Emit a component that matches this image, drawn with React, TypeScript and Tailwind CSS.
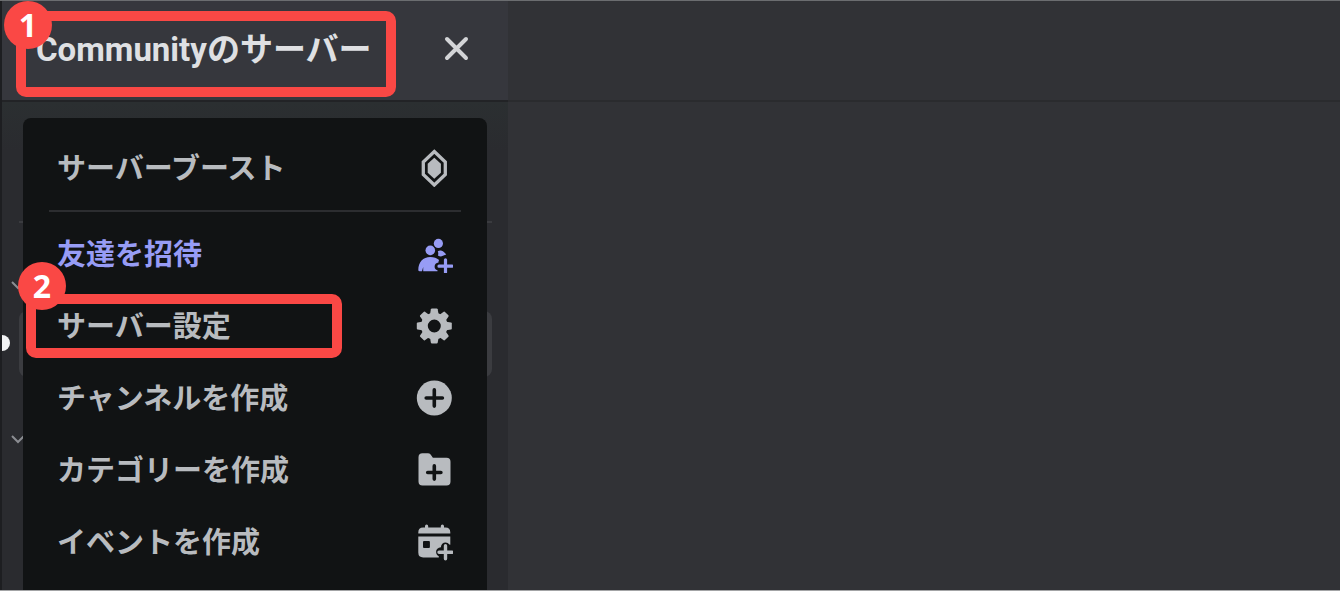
import React from 'react';

type IconProps = { children: React.ReactNode };

function Icon({ children }: IconProps) {
  return (
    <svg viewBox="0 0 38 38" className="h-[38px] w-[38px] shrink-0" fill="currentColor" aria-hidden="true">
      {children}
    </svg>
  );
}

function BoostIcon() {
  return (
    <Icon>
      <path d="M19.3 2.5 30.3 13v12.5L19.3 36 8.3 25.5V13Z" fill="none" stroke="currentColor" strokeWidth="3.3" />
      <path d="M19.3 8.8 25.9 14.8v8.9L19.3 29.7l-6.6-6v-8.9Z" />
    </Icon>
  );
}

function InviteIcon() {
  return (
    <Icon>
      <circle cx="23.4" cy="8.4" r="4.6" />
      <path d="M22.8 16.2c1.2-.9 2.6-1 3.9-.5 1.7.6 3.2 2 4.5 3.8l-5.2 2c-1-.1-2-.5-3.1-1.1.6-1.3.5-2.8-.1-4.2Z" />
      <circle cx="15.3" cy="15.4" r="4.8" />
      <path d="M3.3 35c0-7.7 4.7-13 12-13 3.6 0 6.5 1 8.8 3.1-.5.7-.7 1.5-.6 2.4-2.4.3-3.9 1.8-3.9 3.9 0 2 1.1 3.4 2.9 3.9v.9H8.2v-4.3l-1.2 4.3H4.5c-.8 0-1.200-.5-1.200-1.200Z" />
      <path d="M30.5 24.8v12.6M24 31.2h13" stroke="currentColor" strokeWidth="3.2" strokeLinecap="round" />
    </Icon>
  );
}

function GearIcon() {
  const teeth = [0, 45, 90, 135, 180, 225, 270, 315];
  return (
    <Icon>
      <circle cx="19.3" cy="19" r="9.9" fill="none" stroke="currentColor" strokeWidth="6.8" />
      {teeth.map((angle) => (
        <path
          key={angle}
          d="M14.8 8.5 15.9 2.3q.2-.8 1-.8h4.8q.8 0 1 .8L23.8 8.5Z"
          transform={`rotate(${angle} 19.3 19)`}
        />
      ))}
    </Icon>
  );
}

function ChannelIcon() {
  return (
    <Icon>
      <circle cx="19.3" cy="19" r="17.5" />
      <path d="M19.3 10.9v16.2M11.2 19h16.2" stroke="#111314" strokeWidth="3.6" strokeLinecap="round" />
    </Icon>
  );
}

function FolderIcon() {
  return (
    <Icon>
      <path d="M3.5 6.2q0-4 4-4h5.4q1.7 0 2.7 1.4l2.3 3.2h13.6q4 0 4 4v19.7q0 4-4 4h-24q-4 0-4-4Z" />
      <path d="M19.3 14.9v13.2M12.7 21.5h13.2" stroke="#111314" strokeWidth="3.6" strokeLinecap="round" />
    </Icon>
  );
}

function EventIcon() {
  return (
    <Icon>
      <path d="M10 3.2q0-1.6 1.6-1.6t1.6 1.6v1.2h12.6V3.2q0-1.6 1.6-1.6T29 3.2v1.2h1.5q4.8 0 4.8 5v1.2h-32V9.4q0-5 4.8-5H10Z" />
      <path
        fillRule="evenodd"
        d="M3.3 13.5h32v8.3l-1-.2c-.8-1.2-2.2-2-3.8-2-2.4 0-4.5 1.8-4.6 4.6-2.9.1-4.8 2.1-4.8 4.6 0 2.2 1 3.9 2.7 4.5v1.2H8.2q-4.9 0-4.9-4.9ZM8 19v5q0 1 1 1h4.9q1 0 1-1v-5q0-1-1-1H9q-1 0-1 1Z"
      />
      <path d="M30.5 22.7v13M24 29.2h13" stroke="currentColor" strokeWidth="3.4" strokeLinecap="round" />
    </Icon>
  );
}

function Badge({ children }: IconProps) {
  return (
    <span className="absolute flex h-12 w-12 items-center justify-center rounded-full bg-[#fa4845] font-['Open_Sans',sans-serif] text-[32px] leading-none font-bold text-white">
      {children}
    </span>
  );
}

type MenuItemProps = {
  label: string;
  icon: React.ReactNode;
  accent?: boolean;
};

function MenuItem({ label, icon, accent }: MenuItemProps) {
  return (
    <button
      type="button"
      className={`flex h-[72px] w-full items-center justify-between px-[34px] text-[29px] leading-10 font-bold ${
        accent ? 'text-[#979cf5]' : 'text-[#b8bbbf]'
      }`}
    >
      <span className="pb-1">{label}</span>
      {icon}
    </button>
  );
}

function Chevron() {
  return (
    <svg viewBox="0 0 14 10" className="h-[10px] w-[14px]" fill="none" stroke="#8b8d92" strokeWidth="2" aria-hidden="true">
      <path d="m1 2 6 6 6-6" />
    </svg>
  );
}

export default function App() {
  return (
    <div className="flex min-h-screen border-t border-b border-t-[#6b6d70] border-b-[#a3a4a6] bg-[#313236] font-['Noto_Sans_CJK_JP',sans-serif]">
      {/* Sidebar */}
      <aside className="flex w-[508px] shrink-0 flex-col border-l-2 border-[#1d1e21] bg-[#2a2c2f]">
        <header className="flex h-[101px] items-start border-b-2 border-[#222326] bg-[#36373d] pt-[10px] pl-[14px]">
          <div className="relative flex h-[86px] w-[380px] items-center rounded-[10px] border-[10px] border-[#fa4845] pb-2 pl-[10px]">
            <h1 className="font-[Roboto,'Noto_Sans_CJK_JP',sans-serif] text-[33px] leading-10 font-bold whitespace-nowrap text-[#dfe0e3]">
              Communityのサーバー
            </h1>
            <div className="absolute -top-5 -left-[22px]">
              <Badge>1</Badge>
            </div>
          </div>
          <button type="button" aria-label="閉じる" className="mt-6 ml-12 text-[#d3d4d7]">
            <svg viewBox="0 0 26 26" className="h-[26px] w-[26px]" fill="none" stroke="currentColor" strokeWidth="4" strokeLinecap="round" aria-hidden="true">
              <path d="M3 4l19 19M22 4 3 23" />
            </svg>
          </button>
        </header>

        <div className="relative flex flex-1 flex-col bg-linear-to-b from-[#2b2f31] to-[#2a2b2f] to-10% px-[21px] pt-4">
          {/* Channel list behind the menu */}
          <div className="absolute top-[119px] right-4 left-[17px] h-[2px] bg-[#3a3b3f]" />
          <div className="absolute top-[178px] left-[9px]"><Chevron /></div>
          <div className="absolute top-[209px] right-4 left-[17px] h-[66px] rounded-lg bg-[#3b3c40]" />
          <div className="absolute top-[233px] left-0 h-4 w-2 rounded-r-full bg-[#f2f3f4]" />
          <div className="absolute top-[332px] left-[9px]"><Chevron /></div>

          <nav aria-label="サーバーメニュー" className="relative flex-1 rounded-t-lg bg-[#111314] pt-[14px] pb-3">
            <MenuItem label="サーバーブースト" icon={<BoostIcon />} />
            <hr className="mx-[26px] my-[6px] border-t-2 border-[#2c2d30]" />
            <MenuItem label="友達を招待" icon={<InviteIcon />} accent />
            <div className="relative">
              <MenuItem label="サーバー設定" icon={<GearIcon />} />
              <div className="pointer-events-none absolute top-1 left-[3px] h-16 w-[316px] rounded-[10px] border-[10px] border-[#fa4845]">
                <div className="absolute -top-[42px] -left-[18px]">
                  <Badge>2</Badge>
                </div>
              </div>
            </div>
            <MenuItem label="チャンネルを作成" icon={<ChannelIcon />} />
            <MenuItem label="カテゴリーを作成" icon={<FolderIcon />} />
            <MenuItem label="イベントを作成" icon={<EventIcon />} />
          </nav>
        </div>
      </aside>

      {/* Content */}
      <main className="flex-1">
        <div className="h-[101px] border-b-2 border-[#2a2b2e]" />
      </main>
    </div>
  );
}
